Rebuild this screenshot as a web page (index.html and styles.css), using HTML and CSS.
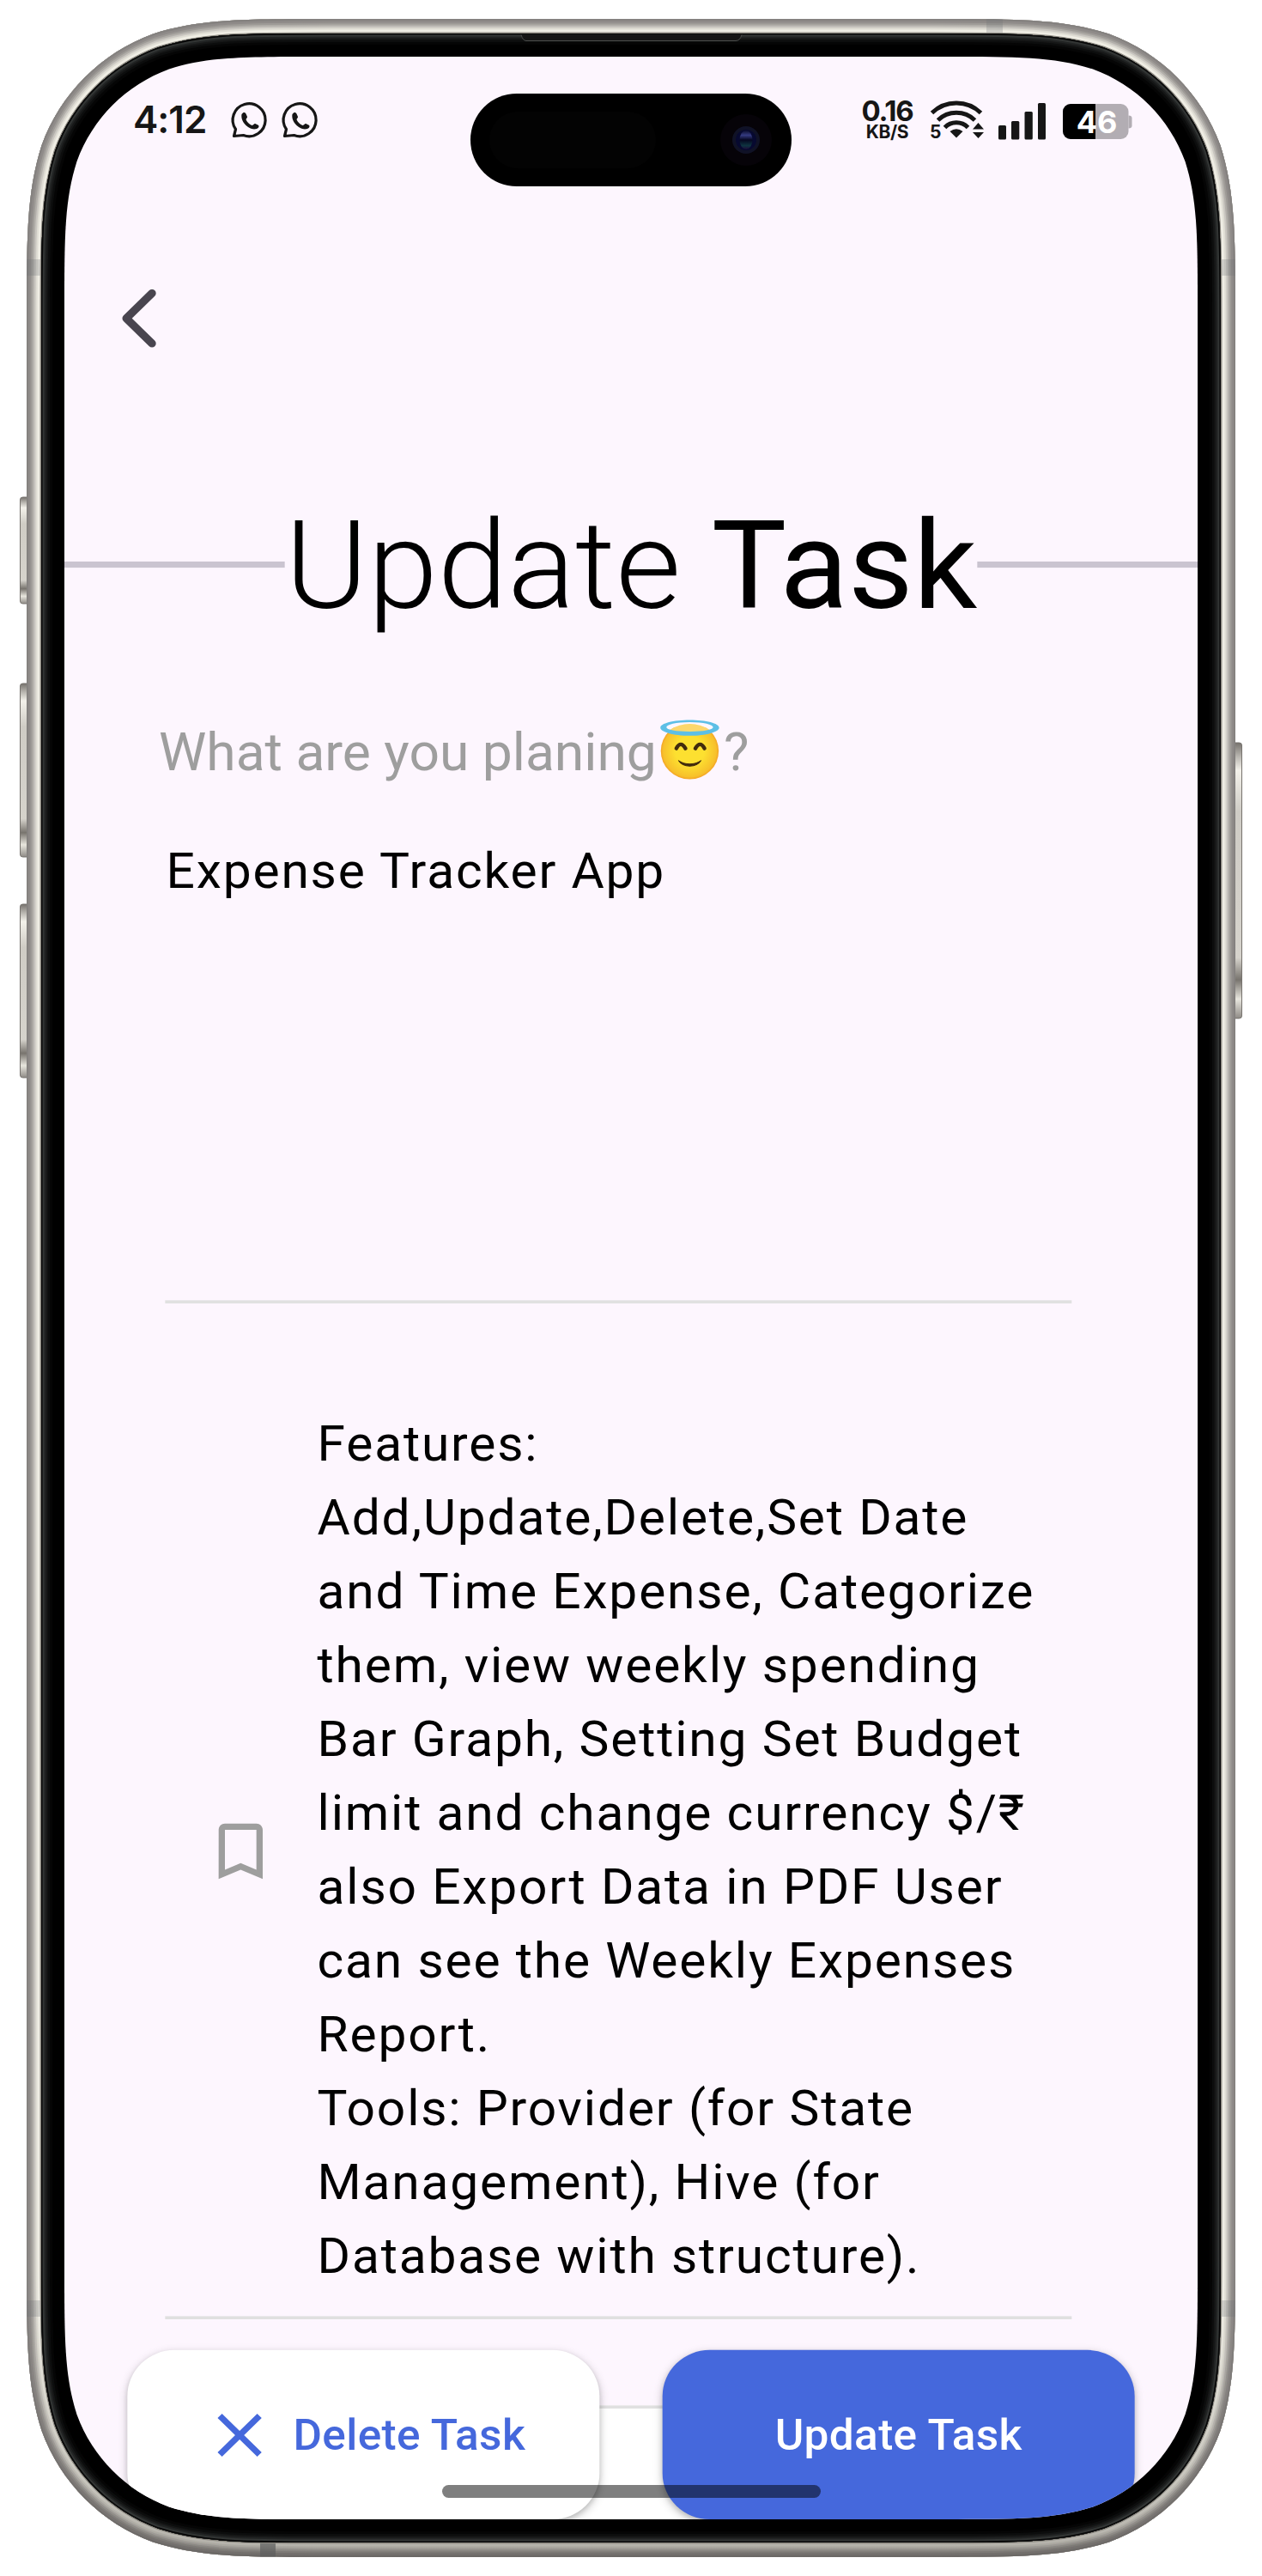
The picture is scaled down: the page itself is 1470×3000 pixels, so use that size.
FILE: index.html
```html
<!DOCTYPE html>
<html lang="en">
<head>
<meta charset="utf-8">
<title>Update Task</title>
<link rel="stylesheet" href="styles.css">
</head>
<body>
<main class="stage">
  <svg class="device" viewBox="0 0 1470 3000" aria-hidden="true">
    <defs>
      <path id="shell" d="M387.2 22H1082.8c102.6 0 153.8 0 209 17.5c60.3 21.9 107.7 69.4 129.7 129.7c17.5 55.2 17.5 106.5 17.5 209V2621.8c0 102.6 0 153.8-17.5 209c-21.9 60.3-69.4 107.7-129.7 129.7c-55.2 17.5-106.5 17.5-209 17.5H387.2c-102.6 0-153.8 0-209-17.5c-60.3-21.9-107.7-69.4-129.7-129.7c-17.5-55.2-17.5-106.5-17.5-209V378.2c0-102.6 0-153.8 17.5-209c21.9-60.3 69.4-107.7 129.7-129.7c55.2-17.5 106.5-17.5 209-17.5Z"/>
      <path id="bezel" d="M378.2 39H1091.8c95.1 0 142.6 0 193.8 16.2c55.9 20.3 99.9 64.3 120.2 120.2c16.2 51.2 16.2 98.7 16.2 193.8V2630.8c0 95.1 0 142.6-16.2 193.8c-20.3 55.9-64.3 99.9-120.2 120.2c-51.2 16.2-98.7 16.2-193.8 16.2H378.2c-95.1 0-142.6 0-193.8-16.2c-55.9-20.3-99.9-64.3-120.2-120.2c-16.2-51.2-16.2-98.7-16.2-193.8V369.2c0-95.1 0-142.6 16.2-193.8c20.3-55.9 64.3-99.9 120.2-120.2c51.2-16.2 98.7-16.2 193.8-16.2Z"/>
      <clipPath id="shellClip"><use href="#shell"/></clipPath>
      <clipPath id="bezelClip"><use href="#bezel"/></clipPath>
      <linearGradient id="key" x1="0" y1="0" x2="0" y2="1">
        <stop offset="0" stop-color="#76726d"/><stop offset=".05" stop-color="#b9b6b0"/>
        <stop offset=".1" stop-color="#f3f1ea"/><stop offset=".25" stop-color="#cfccc5"/>
        <stop offset=".78" stop-color="#d6d3cc"/><stop offset=".86" stop-color="#78746e"/>
        <stop offset=".93" stop-color="#e8e6de"/><stop offset="1" stop-color="#8f8b86"/>
      </linearGradient>
      <linearGradient id="floorShade" x1="0" y1="0" x2="0" y2="1">
        <stop offset="0" stop-color="#3a3733" stop-opacity="0"/><stop offset=".7" stop-color="#3a3733" stop-opacity=".22"/><stop offset="1" stop-color="#3a3733" stop-opacity=".34"/>
      </linearGradient>
      <linearGradient id="lens" x1="0" y1="0" x2="0" y2="1">
        <stop offset="0" stop-color="#0c0e2e"/><stop offset=".25" stop-color="#343a80"/>
        <stop offset=".5" stop-color="#050620"/><stop offset=".8" stop-color="#0e3440"/><stop offset="1" stop-color="#1c0a38"/>
      </linearGradient>
    </defs>
    <g fill="url(#key)" stroke="#77736e" stroke-width="1">
      <rect x="23.500" y="579" width="12" height="124" rx="3"/>
      <rect x="23.500" y="796" width="12" height="202" rx="3"/>
      <rect x="23.500" y="1053" width="12" height="202" rx="3"/>
      <rect x="1434.500" y="865" width="12" height="321" rx="3"/>
    </g>
    <g clip-path="url(#shellClip)" fill="none">
      <use href="#shell" fill="#e6e4da"/>
      <use href="#shell" stroke="#efede4" stroke-width="32"/>
      <use href="#shell" stroke="#dfddd4" stroke-width="25"/>
      <use href="#shell" stroke="#c9c6c0" stroke-width="21"/>
      <use href="#shell" stroke="#b1aea9" stroke-width="17"/>
      <use href="#shell" stroke="#9d9a96" stroke-width="13"/>
      <use href="#shell" stroke="#8f8b89" stroke-width="9"/>
      <use href="#shell" stroke="#858280" stroke-width="4"/>
      <g fill="#6d7072" fill-opacity=".25">
        <rect x="31" y="302" width="17" height="19"/><rect x="1422" y="302" width="17" height="19"/>
        <rect x="31" y="2679" width="17" height="19"/><rect x="1422" y="2679" width="17" height="19"/>
        <rect x="1149" y="22" width="19" height="17"/><rect x="303" y="2961" width="18" height="17" fill-opacity=".7"/>
      </g>
      <rect x="31" y="2680" width="1408" height="298" fill="url(#floorShade)"/>
      <use href="#bezel" stroke="#8d8a82" stroke-width="3"/>
    </g>
    <g clip-path="url(#bezelClip)" fill="none">
      <use href="#bezel" fill="#000"/>
      <use href="#bezel" stroke="#050505" stroke-width="26"/>
      <use href="#bezel" stroke="#0c0d0d" stroke-width="20"/>
      <use href="#bezel" stroke="#161717" stroke-width="15"/>
      <use href="#bezel" stroke="#212323" stroke-width="11"/>
      <use href="#bezel" stroke="#323534" stroke-width="7"/>
      <use href="#bezel" stroke="#080808" stroke-width="3"/>
      <path d="M607 40.500q2 7 6 7H857q5 0 7-7" fill="#151515" stroke="#4b4d4c"/>
    </g>
  </svg>

  <section class="screen">
    <div class="app">
      <header class="back">
        <svg class="back-icon" viewBox="0 0 36 60"><path d="M30.500 5.500 6 30l24.500 24.500" fill="none" stroke="#49454f" stroke-width="7.600" stroke-linecap="round" stroke-linejoin="round"/></svg>
      </header>
      <div class="title-row">
        <span class="rule"></span>
        <h1 class="title">Update <b>Task</b></h1>
        <span class="rule"></span>
      </div>
      <p class="prompt">What are you planing<svg class="emoji" viewBox="0 0 68 66">
          <defs><radialGradient id="face" cx=".5" cy=".5" r=".5"><stop offset=".5" stop-color="#fde030"/><stop offset=".92" stop-color="#f7c02b"/><stop offset="1" stop-color="#f4a223"/></radialGradient></defs>
          <circle cx="34" cy="32.500" r="33.500" fill="url(#face)"/>
          <path d="M0-2H68V9q-34 -12-68 0z" fill="#fdf6fe"/>
          <path d="M10 8q24-15 48 0z" fill="#fbc62c"/>
          <ellipse cx="34" cy="5.500" rx="27" ry="5" fill="#fff" opacity=".3"/>
          <path d="M34-4c19 0 34 4 34 9s-15 9.500-34 9.500S0 10 0 5s15-9 34-9zm0 2.500C18-1.500 7 1.500 7 4.500s11 5 27 5 27-2 27-5-11-6-27-6z" fill="#5dbfe6"/>
          <path d="M18.500 29.500q5-9.500 10.500 0M40.500 29.500q5.500-9.500 10.500 0" fill="none" stroke="#422b0d" stroke-width="4.500" stroke-linecap="round"/>
          <path d="M21 44q13 8 26 0-4 6.500-13 6.500t-13-6.500z" fill="#422b0d" stroke="#422b0d" stroke-width="1" stroke-linejoin="round"/>
        </svg>?</p>
      <div class="field name-field">Expense Tracker App</div>
      <div class="note-row">
        <svg class="bookmark" viewBox="0 0 24 24"><path fill="#9e9e9e" d="M17 3H7c-1.100 0-1.990.9-1.990 2L5 21l7-3 7 3V5c0-1.100-.9-2-2-2zm0 15-5-2.180L7 18V5h10v13z"/></svg>
        <p class="field">Features:<br>Add,Update,Delete,Set Date<br>and Time Expense, Categorize<br>them, view weekly spending<br>Bar Graph, Setting Set Budget<br>limit and change currency $/₹<br>also Export Data in PDF User<br>can see the Weekly Expenses<br>Report.<br>Tools: Provider (for State<br>Management), Hive (for<br>Database with structure).</p>
      </div>
      <div class="bottom">
        <div class="date-card"></div>
        <div class="actions">
          <button class="btn btn-delete">
            <svg class="close" viewBox="0 0 24 24"><path fill="#4568dc" d="M19 6.410 17.590 5 12 10.590 6.410 5 5 6.410 10.590 12 5 17.590 6.410 19 12 13.410 17.590 19 19 17.590 13.410 12z"/></svg>
            Delete Task
          </button>
          <button class="btn btn-update">Update Task</button>
        </div>
      </div>
    </div>

    <div class="status">
      <div class="status-left">
        <span class="time">4:12</span>
        <svg class="chat" viewBox="0 0 42 42"><path d="M2.500 38.500 4.500 30.500A19 19 0 1 1 13.500 37.500Z" fill="none" stroke="#161616" stroke-width="3.200" stroke-linejoin="round"/><path d="M11.500 13c2-3 4-2.500 5-.5l1.500 3.500c.4 1.500-2 2.200-1.300 3.700 1.400 3 4 5 6.800 6.200 1.500.5 2.300-2.200 3.800-1.800l3.500 1.600c1.600 1 .5 4-3 4.600-8 1.400-18-8.500-16.300-17.300z" fill="#161616"/></svg>
        <svg class="chat" viewBox="0 0 42 42"><path d="M2.500 38.500 4.500 30.500A19 19 0 1 1 13.500 37.500Z" fill="none" stroke="#161616" stroke-width="3.200" stroke-linejoin="round"/><path d="M11.500 13c2-3 4-2.500 5-.5l1.500 3.500c.4 1.500-2 2.200-1.300 3.700 1.400 3 4 5 6.800 6.200 1.500.5 2.300-2.200 3.800-1.800l3.500 1.600c1.600 1 .5 4-3 4.600-8 1.400-18-8.500-16.300-17.300z" fill="#161616"/></svg>
      </div>
      <div class="status-right">
        <div class="speed"><span class="rate">0.16</span><span class="unit">KB/S</span></div>
        <svg class="wifi" viewBox="0 0 63 45">
          <g fill="none" stroke="#161616" stroke-width="5">
            <path d="M2.500 14.500a41 41 0 0 1 57 0"/><path d="M9.500 23a31 31 0 0 1 43 0"/><path d="M17.500 31.500a19 19 0 0 1 27 0"/>
          </g>
          <path d="M31 43.500 23.500 36q7.500-5.500 15 0z" fill="#161616"/>
          <path d="M50 33.500h13l-6.500-7.500zM50 37h13l-6.500 7z" fill="#161616"/>
          <text x="0" y="43.500" class="band">5</text>
        </svg>
        <svg class="signal" viewBox="0 0 55 44" fill="#161616"><rect y="27" width="9" height="16.500" rx="1.500"/><rect x="15" y="22" width="9.300" height="21.500" rx="1.500"/><rect x="30.500" y="11" width="9.300" height="32.500" rx="1.500"/><rect x="46" y="1" width="9" height="42.500" rx="1.500"/></svg>
        <svg class="battery" viewBox="0 0 81 41">
          <rect width="76.500" height="41" rx="9" fill="#b2adb3"/><path d="M76.500 13.500q4 0 4 3v9q0 3-4 3z" fill="#b2adb3"/>
          <path d="M38 0v41H9a9 9 0 0 1-9-9V9a9 9 0 0 1 9-9z" fill="#000"/>
          <text x="39.500" y="34" text-anchor="middle" class="level">46</text>
        </svg>
      </div>
    </div>

    <div class="island">
      <span class="sensor"></span>
      <svg class="camera" viewBox="0 0 60 60"><circle cx="30" cy="30" r="30" fill="#060308"/><circle cx="30" cy="30" r="16" fill="#101226"/><circle cx="30" cy="30" r="12" fill="#070930"/><ellipse cx="30" cy="30" rx="7.500" ry="11" fill="url(#lens)"/></svg>
    </div>
    <div class="home-bar"></div>
  </section>
</main>
</body>
</html>
```
FILE: styles.css
```css
* { box-sizing: border-box; }
body { margin: 0; background: #fff; }

.stage { display: grid; width: 1470px; height: 3000px; overflow: hidden; }
.device { grid-area: 1 / 1; width: 1470px; height: 3000px; }

.screen {
  grid-area: 1 / 1;
  position: relative;
  display: grid;
  margin: 66px 75px;
  width: 1320px;
  height: 2868px;
  background: #fdf6fe;
  overflow: hidden;
  clip-path: path("M295.1 0H1024.900c85 0 127.400 0 173.200 14.500c49.900 18.200 89.200 57.500 107.400 107.400c14.500 45.700 14.500 88.200 14.500 173.200V2572.900c0 85 0 127.400-14.500 173.200c-18.200 49.900-57.500 89.200-107.400 107.400c-45.700 14.500-88.200 14.500-173.200 14.500H295.100c-85 0-127.400 0-173.200-14.500c-49.900-18.200-89.200-57.500-107.400-107.400c-14.500-45.700-14.500-88.200-14.500-173.200V295.100c0-85 0-127.400 14.500-173.200c18.200-49.900 57.500-89.200 107.400-107.400c45.700-14.500 88.200-14.500 173.200-14.500Z");
}

/* App canvas: 1080x2400, stretched to the display */
.app {
  grid-area: 1 / 1;
  display: flex;
  flex-direction: column;
  width: 1080px;
  height: 2400px;
  transform: scale(1.22222, 1.195);
  transform-origin: 0 0;
  font-family: Roboto, sans-serif;
  color: #000;
}
.back { height: 425px; padding: 224.500px 0 0 53px; }
.back-icon { display: block; width: 36px; height: 60px; }

.title-row { display: flex; align-items: center; height: 140px; }
.rule { flex: 1; height: 6px; background: #cac4d0; }
.title { margin: 0; padding-top: 1px; height: 140px; font-size: 120px; line-height: 140px; font-weight: 300; white-space: nowrap; }
.title b { font-weight: 400; }

.prompt {
  margin: 82.600px 0 0 90px;
  height: 60px;
  font-size: 51px;
  line-height: 60px;
  color: #9e9e9e;
  white-space: nowrap;
}
.emoji { width: 56px; height: 56px; margin: -4px 4px 0 4px; vertical-align: -10.500px; overflow: visible; }

.field { margin: 0; font-size: 48px; line-height: 72px; letter-spacing: 1.500px; white-space: nowrap; }
.name-field { margin: 50.400px 120px 0 96px; padding-left: 1px; height: 457px; border-bottom: 3px solid #e0e0e0; }
.note-row {
  display: flex;
  align-items: center;
  gap: 37px;
  margin: 0 120px 0 96px;
  padding: 101px 0 22px 36px;
  border-bottom: 3px solid #e0e0e0;
}
.bookmark { flex: none; width: 72px; height: 72px; margin-top: 2px; }

.bottom { display: grid; margin-top: 30px; padding: 0 60px; height: 165px; }
.date-card { grid-area: 1 / 1; margin: 54px 6px 0; background: #fff; border-top: 3px solid #e0e0e0; }
.actions { grid-area: 1 / 1; display: flex; gap: 60px; }
.btn {
  display: flex;
  align-items: center;
  flex: 0 0 450px;
  height: 165px;
  padding: 1px 0 0;
  border: 0;
  border-radius: 45px;
  font: 500 42px/60px Roboto, sans-serif;
  letter-spacing: .3px;
  box-shadow: 0 3px 9px rgba(0, 0, 0, .2), 0 2px 4px rgba(0, 0, 0, .1);
}
.btn-delete { padding-left: 71px; gap: 15px; background: #fff; color: #4568dc; }
.btn-update { justify-content: center; background: #4568dc; color: #fff; }
.close { width: 72px; height: 72px; }

.status {
  grid-area: 1 / 1;
  align-self: start;
  display: flex;
  justify-content: space-between;
  height: 150px;
  padding: 51px 76px 0 80px;
  font-family: Inter, sans-serif;
  color: #161616;
  z-index: 1;
}
.status-left, .status-right { display: flex; align-items: flex-start; }
.time { width: 115px; font-size: 44px; line-height: 44px; font-weight: 600; letter-spacing: -1px; }
.chat { width: 42px; height: 42px; margin: 2.500px 17px 0 0; overflow: visible; }
.speed { display: flex; flex-direction: column; align-items: center; width: 63px; margin-right: 18px; font-weight: 700; }
.rate { font-size: 33px; line-height: 25px; letter-spacing: -1.200px; }
.unit { padding-top: 1px; font-size: 21px; line-height: 21px; letter-spacing: -.4px; }
.wifi { width: 63px; height: 45px; margin: 0 17px 0 0; overflow: visible; }
.band { font: 700 21px Inter, sans-serif; fill: #161616; }
.signal { width: 55px; height: 44px; margin: 1.500px 20px 0 0; }
.battery { width: 81px; height: 41px; margin-top: 3.500px; overflow: visible; }
.level { font: 700 36px Inter, sans-serif; fill: #fff; }

.island {
  position: absolute;
  left: 473px;
  top: 43px;
  z-index: 2;
  display: flex;
  align-items: center;
  justify-content: space-between;
  width: 374px;
  height: 108px;
  padding: 0 23px 0 22px;
  border-radius: 54px;
  background: #000;
}
.sensor { width: 194px; height: 66px; border-radius: 33px; background: #030303; }
.camera { width: 60px; height: 60px; }

.home-bar {
  position: absolute;
  left: 439.500px;
  bottom: 25px;
  width: 441px;
  height: 15px;
  border-radius: 8px;
  background: rgba(0, 0, 0, .5);
}
```
